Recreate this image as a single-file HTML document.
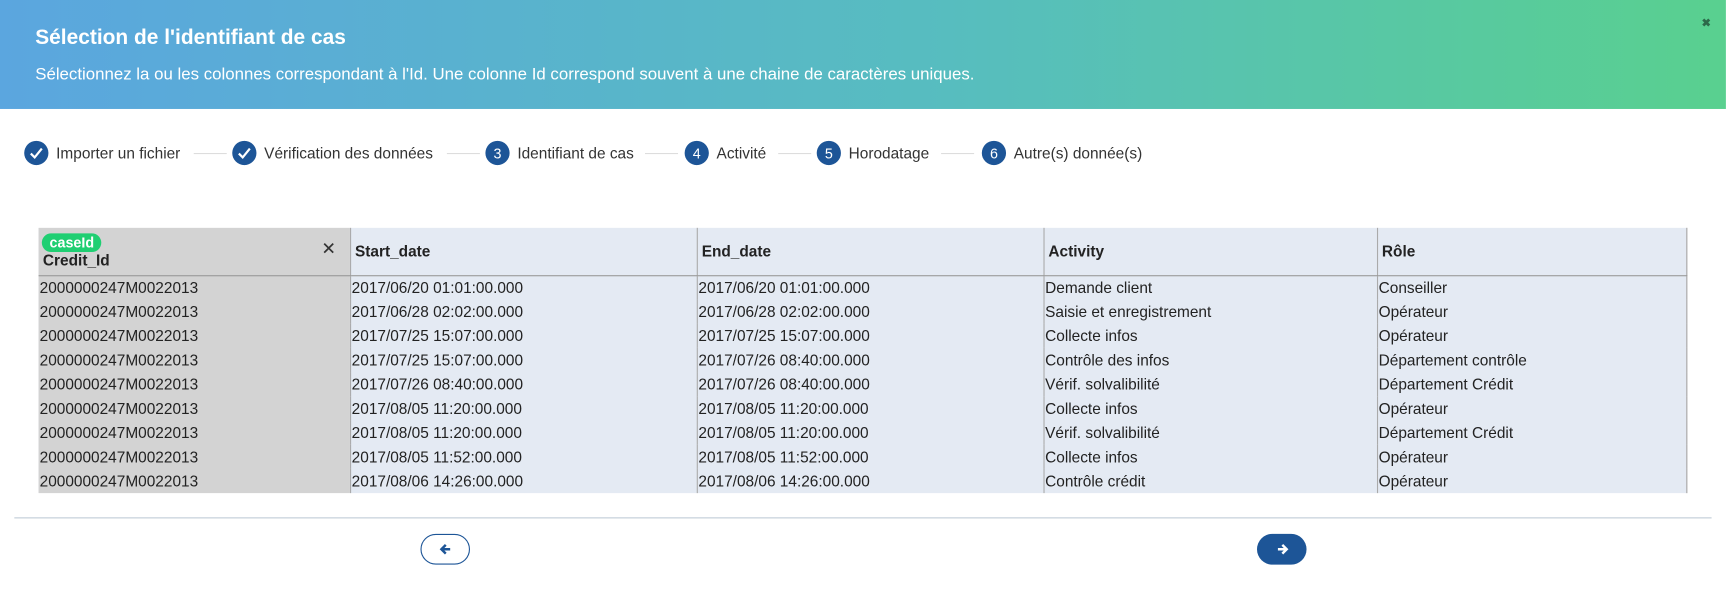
<!DOCTYPE html>
<html><head><meta charset="utf-8"><style>
*{margin:0;padding:0;box-sizing:border-box}
html,body{width:1726px;height:594px;overflow:hidden;background:#fff}
#w{position:absolute;left:0;top:0;width:1568px;height:540px;transform:scale(1.1007);transform-origin:0 0;font-family:"Liberation Sans",sans-serif;color:#222}
.hdr{position:absolute;left:0;top:0;width:1568px;height:99px;background:linear-gradient(90deg,#5ba6df,#57bdbf 55%,#59d08f)}
.t1{position:absolute;left:32px;top:24px;font-size:19px;font-weight:bold;color:#fff}
.t2{position:absolute;left:32px;top:59px;font-size:15.3px;color:#fff}
.x{position:absolute;left:1546px;top:16px;font-size:10px;font-weight:bold;color:#2d6a4a}
.st{position:absolute;top:128px;height:22px;display:flex;align-items:center;font-size:14px;color:#333}
.c{width:22px;height:22px;border-radius:50%;background:#1d5597;color:#fff;font-size:13px;display:flex;align-items:center;justify-content:center;margin-right:7px}
.ln{position:absolute;top:139px;height:1px;background:#ddd}
table{position:absolute;left:35px;top:207px;width:1497px;border-collapse:collapse;font-size:14px;table-layout:fixed;background:linear-gradient(90deg,#d3d3d3 283px,#e4eaf3 283px)}
th{height:43px;text-align:left;font-weight:bold;font-size:14px;padding:0 4px;border-bottom:1px solid #999;border-right:1px solid #aaa;vertical-align:middle}
td{height:22px;padding:0 1px;border-right:1px solid #aaa;white-space:nowrap}
.tag{position:absolute;left:38px;top:212px;background:#1fcf72;color:#fff;font-weight:bold;font-size:13px;padding:1px 7px;border-radius:9px}
.hx{position:absolute;left:292px;top:216px;font-size:16px;color:#333}
.dv{position:absolute;left:13px;top:470px;width:1542px;height:1px;background:#c0ccd6}
.b{position:absolute;top:485px;width:45px;height:28px;border-radius:14px;display:flex;align-items:center;justify-content:center}
</style></head><body><div id="w">
<div class="hdr"></div>
<div class="t1">Sélection de l'identifiant de cas</div>
<div class="t2">Sélectionnez la ou les colonnes correspondant à l'Id. Une colonne Id correspond souvent à une chaine de caractères uniques.</div>
<div class="x">✖</div>
<div class="st" style="left:22px"><span class="c"><svg width="14" height="14" viewBox="0 0 14 14"><path d="M2 7.5L5.5 11L12 3" stroke="#fff" stroke-width="2" fill="none"/></svg></span>Importer un fichier</div>
<div class="ln" style="left:176px;width:30px"></div>
<div class="st" style="left:211px"><span class="c"><svg width="14" height="14" viewBox="0 0 14 14"><path d="M2 7.5L5.5 11L12 3" stroke="#fff" stroke-width="2" fill="none"/></svg></span>Vérification des données</div>
<div class="ln" style="left:406px;width:30px"></div>
<div class="st" style="left:441px"><span class="c">3</span>Identifiant de cas</div>
<div class="ln" style="left:586px;width:30px"></div>
<div class="st" style="left:622px"><span class="c">4</span>Activité</div>
<div class="ln" style="left:707px;width:30px"></div>
<div class="st" style="left:742px"><span class="c">5</span>Horodatage</div>
<div class="ln" style="left:855px;width:30px"></div>
<div class="st" style="left:892px"><span class="c">6</span>Autre(s) donnée(s)</div>
<table>
<colgroup><col style="width:283px"><col style="width:315px"><col style="width:315px"><col style="width:303px"><col style="width:281px"></colgroup>
<tr><th style="padding-top:16px">Credit_Id</th><th>Start_date</th><th>End_date</th><th>Activity</th><th>Rôle</th></tr>
<tr><td>2000000247M0022013</td><td>2017/06/20 01:01:00.000</td><td>2017/06/20 01:01:00.000</td><td>Demande client</td><td>Conseiller</td></tr>
<tr><td>2000000247M0022013</td><td>2017/06/28 02:02:00.000</td><td>2017/06/28 02:02:00.000</td><td>Saisie et enregistrement</td><td>Opérateur</td></tr>
<tr><td>2000000247M0022013</td><td>2017/07/25 15:07:00.000</td><td>2017/07/25 15:07:00.000</td><td>Collecte infos</td><td>Opérateur</td></tr>
<tr><td>2000000247M0022013</td><td>2017/07/25 15:07:00.000</td><td>2017/07/26 08:40:00.000</td><td>Contrôle des infos</td><td>Département contrôle</td></tr>
<tr><td>2000000247M0022013</td><td>2017/07/26 08:40:00.000</td><td>2017/07/26 08:40:00.000</td><td>Vérif. solvalibilité</td><td>Département Crédit</td></tr>
<tr><td>2000000247M0022013</td><td>2017/08/05 11:20:00.000</td><td>2017/08/05 11:20:00.000</td><td>Collecte infos</td><td>Opérateur</td></tr>
<tr><td>2000000247M0022013</td><td>2017/08/05 11:20:00.000</td><td>2017/08/05 11:20:00.000</td><td>Vérif. solvalibilité</td><td>Département Crédit</td></tr>
<tr><td>2000000247M0022013</td><td>2017/08/05 11:52:00.000</td><td>2017/08/05 11:52:00.000</td><td>Collecte infos</td><td>Opérateur</td></tr>
<tr><td>2000000247M0022013</td><td>2017/08/06 14:26:00.000</td><td>2017/08/06 14:26:00.000</td><td>Contrôle crédit</td><td>Opérateur</td></tr>
</table>
<div class="tag">caseId</div>
<div class="hx">✕</div>
<div class="dv"></div>
<div class="b" style="left:382px;border:1px solid #1d5597;background:#fff"><svg width="12" height="12" viewBox="0 0 12 12"><path d="M10 6H2.5M6 2L2 6L6 10" stroke="#1d5597" stroke-width="2.2" fill="none"/></svg></div>
<div class="b" style="left:1142px;background:#1d5597"><svg width="12" height="12" viewBox="0 0 12 12"><path d="M2 6H9.5M6 2L10 6L6 10" stroke="#fff" stroke-width="2.2" fill="none"/></svg></div>
</div></body></html>
